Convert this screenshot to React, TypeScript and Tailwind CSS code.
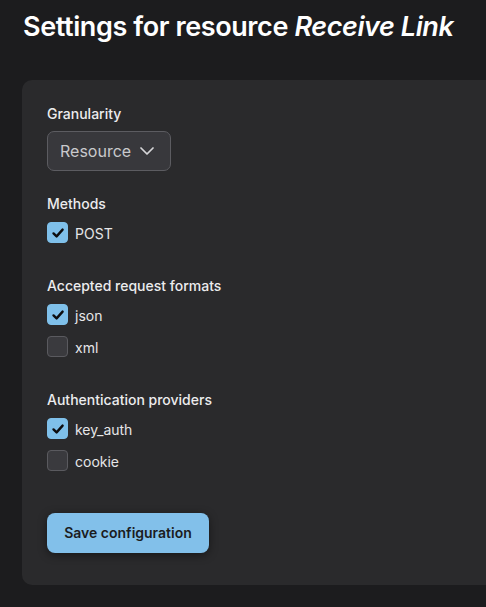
import React, { useState } from 'react';

const FONT = { fontFamily: 'Inter, "Noto Sans", sans-serif' };

type Group = { label: string; items: { name: string; checked: boolean }[] };

const GROUPS: Group[] = [
  { label: 'Methods', items: [{ name: 'POST', checked: true }] },
  {
    label: 'Accepted request formats',
    items: [
      { name: 'json', checked: true },
      { name: 'xml', checked: false },
    ],
  },
  {
    label: 'Authentication providers',
    items: [
      { name: 'key_auth', checked: true },
      { name: 'cookie', checked: false },
    ],
  },
];

function Checkbox({ label, initial }: { label: string; initial: boolean }) {
  const [checked, setChecked] = useState(initial);
  return (
    <label className="flex items-center gap-[7px] h-[21px] cursor-pointer select-none">
      <button
        type="button"
        onClick={() => setChecked((c) => !c)}
        className={
          checked
            ? 'w-[21px] h-[21px] rounded-[4px] bg-[#7fc0ea] border border-[#7fc0ea] flex items-center justify-center'
            : 'w-[21px] h-[21px] rounded-[4px] bg-[#3a3a3e] border border-[#5a5a5f]'
        }
      >
        {checked && (
          <svg width="14" height="14" viewBox="0 0 14 14" fill="none">
            <path d="M2.5 7.4 L5.6 10.4 L11.6 3.6" stroke="#0d0d0f" strokeWidth="2.4" strokeLinecap="round" strokeLinejoin="round" />
          </svg>
        )}
      </button>
      <span className="pt-[2px] text-sm leading-5 text-[#e6e6e8]">{label}</span>
    </label>
  );
}

export default function App() {
  return (
    <div className="min-h-screen w-full overflow-hidden bg-[#1c1c1e] pl-[22px]" style={FONT}>
      <h1 className="pt-[10px] pl-px text-[27px] leading-[33px] font-semibold tracking-[-0.4px] text-white">
        Settings for resource <em className="italic">Receive Link</em>
      </h1>

      <div className="mt-[37px] w-[560px] rounded-[10px] bg-[#2a2a2c] pt-6 pl-[25px] pb-[32px]">
        <div className="text-sm leading-5 font-medium text-[#ececee]">Granularity</div>
        <button
          type="button"
          className="mt-[7px] flex h-10 w-[124px] items-center justify-between rounded-[7px] border border-[#5c5c61] bg-[#38383c] pl-[12px] pr-[16px] text-base text-[#c9c9cc]"
        >
          Resource
          <svg width="14" height="8" viewBox="0 0 14 8" fill="none">
            <path d="M1 1 L7 7 L13 1" stroke="#d6d6d8" strokeWidth="1.7" strokeLinecap="round" strokeLinejoin="round" />
          </svg>
        </button>

        {GROUPS.map((g, i) => (
          <div key={g.label} className={i === 0 ? 'mt-[23px]' : 'mt-[33px]'}>
            <div className="text-sm leading-5 font-medium text-[#ececee]">{g.label}</div>
            <div className="mt-[8px] flex flex-col gap-[11px]">
              {g.items.map((it) => (
                <Checkbox key={it.name} label={it.name} initial={it.checked} />
              ))}
            </div>
          </div>
        ))}

        <button
          type="button"
          className="mt-[42px] h-10 w-[162px] rounded-lg bg-[#82c0ea] text-sm font-semibold text-[#1b1c1f] shadow-[0_2px_10px_rgba(0,0,0,0.45)]"
        >
          Save configuration
        </button>
      </div>
    </div>
  );
}
